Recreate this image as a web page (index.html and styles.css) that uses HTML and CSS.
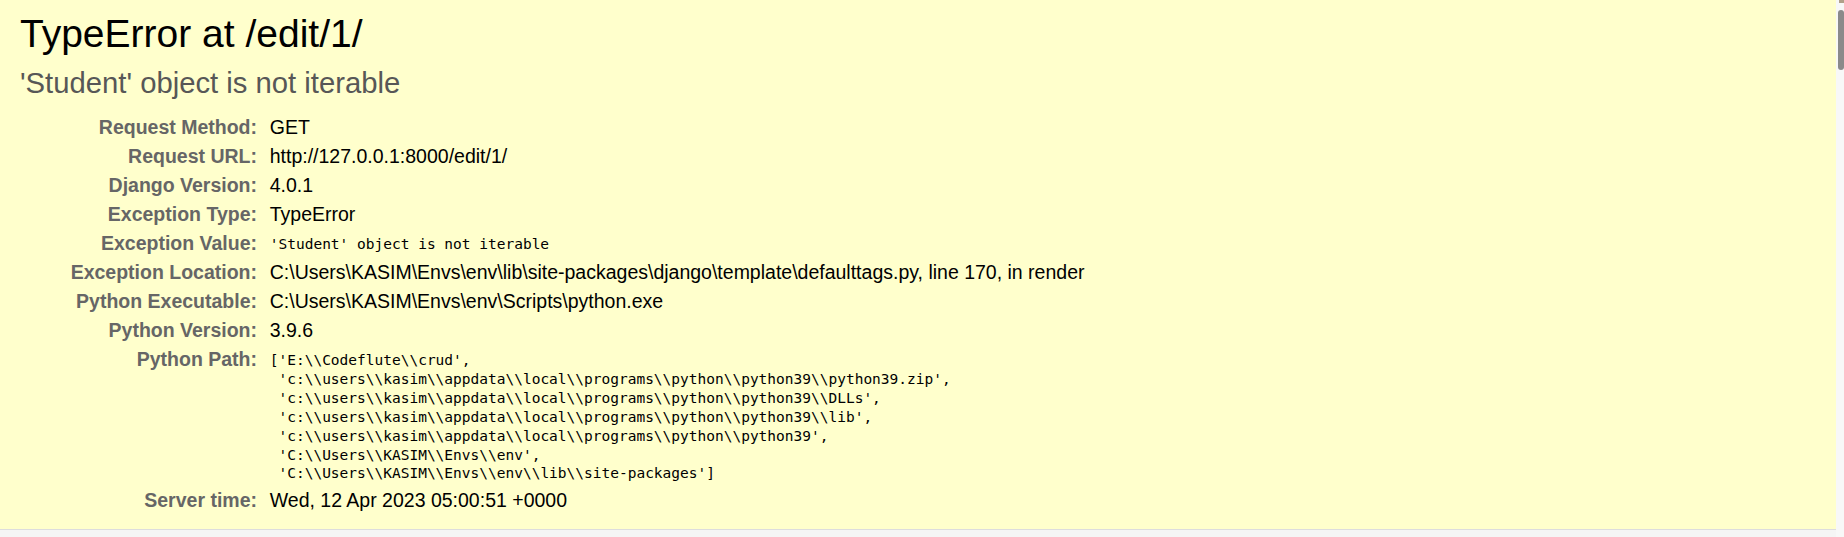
FILE: index.html
```html
<!DOCTYPE html>
<html>
<head>
<meta charset="utf-8">
<title>TypeError at /edit/1/</title>
<link rel="stylesheet" href="styles.css">
</head>
<body>
<div class="page">
  <div class="summary">
    <h1 class="title">TypeError at /edit/1/</h1>
    <pre class="exception-value">'Student' object is not iterable</pre>
    <table class="meta">
      <tbody>
        <tr><th>Request Method:</th><td>GET</td></tr>
        <tr><th>Request URL:</th><td>http://127.0.0.1:8000/edit/1/</td></tr>
        <tr><th>Django Version:</th><td>4.0.1</td></tr>
        <tr><th>Exception Type:</th><td>TypeError</td></tr>
        <tr><th>Exception Value:</th><td><pre class="mono">'Student' object is not iterable</pre></td></tr>
        <tr><th>Exception Location:</th><td>C:\Users\KASIM\Envs\env\lib\site-packages\django\template\defaulttags.py, line 170, in render</td></tr>
        <tr><th>Python Executable:</th><td>C:\Users\KASIM\Envs\env\Scripts\python.exe</td></tr>
        <tr><th>Python Version:</th><td>3.9.6</td></tr>
        <tr><th>Python Path:</th><td><pre class="mono">['E:\\Codeflute\\crud',
 'c:\\users\\kasim\\appdata\\local\\programs\\python\\python39\\python39.zip',
 'c:\\users\\kasim\\appdata\\local\\programs\\python\\python39\\DLLs',
 'c:\\users\\kasim\\appdata\\local\\programs\\python\\python39\\lib',
 'c:\\users\\kasim\\appdata\\local\\programs\\python\\python39',
 'C:\\Users\\KASIM\\Envs\\env',
 'C:\\Users\\KASIM\\Envs\\env\\lib\\site-packages']</pre></td></tr>
        <tr><th>Server time:</th><td>Wed, 12 Apr 2023 05:00:51 +0000</td></tr>
      </tbody>
    </table>
  </div>
  <div class="rest"></div>
</div>
<div class="scrollbar">
  <div class="scroll-arrow"></div>
  <div class="scroll-thumb"></div>
</div>
</body>
</html>
```

FILE: styles.css
```css
* { margin: 0; padding: 0; box-sizing: content-box; }
html, body { height: 100%; }
body {
  display: flex;
  overflow: hidden;
  background: #f5f5f5;
  font-family: "Liberation Sans", Arial, sans-serif;
  font-size: 19.5px;
  color: #000;
}
.page { flex: 1; min-width: 0; display: flex; flex-direction: column; }
.summary {
  background: #ffc;
  padding: 11px 20px 14px 20px;
  border-bottom: 1px solid #ddd;
}
.title {
  font-weight: normal;
  font-size: 39px;
  line-height: 45px;
}
.exception-value {
  font-family: "Liberation Sans", Arial, sans-serif;
  font-size: 29.25px;
  line-height: 34px;
  color: #575757;
  margin: 10px 0 13px 0;
  white-space: pre-wrap;
}
.meta { border-collapse: collapse; border: none; background: transparent; }
.meta th, .meta td {
  vertical-align: top;
  padding: 3px 3px;
  line-height: 23px;
}
.meta th {
  width: 234px;
  text-align: right;
  color: #666;
  font-weight: bold;
  padding-right: 9.75px;
}
.mono {
  font-family: "DejaVu Sans Mono", "Liberation Mono", monospace;
  font-size: 14.5px;
  line-height: 18.9px;
  white-space: pre-wrap;
  padding-top: 3px;
}
.rest { flex: 1; background: #f5f5f5; }
.scrollbar {
  width: 8px;
  background: #f8f8f8;
  display: flex;
  flex-direction: column;
  align-items: flex-end;
}
.scroll-arrow { width: 5px; height: 3px; background: #b0a08a; }
.scroll-thumb {
  margin-top: 7px;
  width: 6px;
  height: 60px;
  border-radius: 3px;
  background: #8a8a8a;
}
```
